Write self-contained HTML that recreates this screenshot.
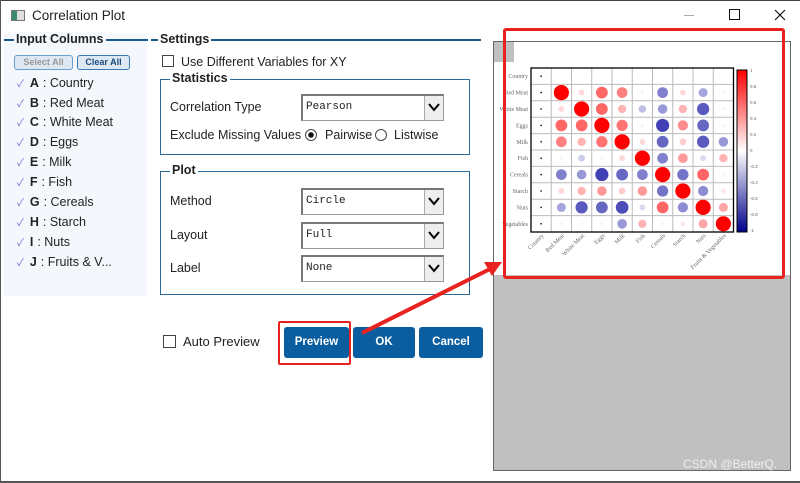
<!DOCTYPE html>
<html><head><meta charset="utf-8"><style>
*{margin:0;padding:0;box-sizing:border-box}
body{width:800px;height:483px;overflow:hidden;background:#fff;font-family:"Liberation Sans","Noto Sans CJK SC",sans-serif;position:relative;color:#222}
.a{position:absolute}
.t{font-size:12.5px;white-space:nowrap}
.hd{font-size:12.5px;font-weight:bold;color:#222;background:#fff;padding:0 2px}
.combo{position:absolute;border:1px solid #999;border-top:2px solid #777;border-left:2px solid #777;background:#fff;font-family:"Liberation Mono",monospace;font-size:11px;padding:0 3px;line-height:23px}
.combo .ar{position:absolute;right:0;top:0;bottom:0;width:19px;background:#eee;border-left:1px solid #aaa}
.combo .ar svg{position:absolute;left:3px;top:6px}
.btn{position:absolute;background:#0a5e9f;color:#fff;font-weight:bold;font-size:11.5px;text-align:center;border-radius:3px;line-height:31px}
.cb{position:absolute;border:1px solid #444;background:#fff}
.item{position:absolute;left:17px;font-size:12.5px}
.item i{color:#6a6ad8;font-style:normal;font-size:10px;margin-right:6px}
.item b{margin-right:4px}
</style></head><body>
<div class="a" style="left:0;top:0;width:800px;height:1px;background:#444"></div>
<div class="a" style="left:0;top:0;width:1px;height:483px;background:#555"></div>
<div class="a" style="left:0;top:481px;width:800px;height:2px;background:#555"></div>
<div class="a" style="left:11px;top:10px;width:14px;height:11px;border:1px solid #777;background:linear-gradient(90deg,#3a8a70 0 40%,#ddd 40%)"></div>
<div class="a t" style="left:32px;top:8px;font-size:13.5px">Correlation Plot</div>
<div class="a" style="left:684px;top:15px;width:10px;height:1px;background:#aaa"></div>
<div class="a" style="left:729px;top:9px;width:11px;height:11px;border:1px solid #111"></div>
<svg class="a" style="left:774px;top:9px" width="12" height="12"><path d="M1 1L11 11M11 1L1 11" stroke="#111" stroke-width="1.2"/></svg>
<div class="a" style="left:4px;top:34px;width:143px;height:262px;background:#f4f8fc"></div>
<div class="a" style="left:4px;top:39px;width:144px;height:2px;background:#1a5a8a"></div>
<div class="a hd" style="left:14px;top:32px;background:#f4f8fc">Input Columns</div>
<div class="a" style="left:14px;top:55px;width:59px;height:15px;border:1px solid #6aa0d0;border-radius:3px;background:#dde8f2;color:#999;font-size:9px;font-weight:bold;text-align:center;line-height:13px">Select All</div>
<div class="a" style="left:77px;top:55px;width:53px;height:15px;border:1px solid #3a7ab8;border-radius:3px;background:#dde8f2;color:#1a4a7a;font-size:9px;font-weight:bold;text-align:center;line-height:13px">Clear All</div>
<div class="item" style="top:75px"><i>✓</i><b>A</b>: Country</div>
<div class="item" style="top:95px"><i>✓</i><b>B</b>: Red Meat</div>
<div class="item" style="top:114px"><i>✓</i><b>C</b>: White Meat</div>
<div class="item" style="top:134px"><i>✓</i><b>D</b>: Eggs</div>
<div class="item" style="top:154px"><i>✓</i><b>E</b>: Milk</div>
<div class="item" style="top:174px"><i>✓</i><b>F</b>: Fish</div>
<div class="item" style="top:194px"><i>✓</i><b>G</b>: Cereals</div>
<div class="item" style="top:214px"><i>✓</i><b>H</b>: Starch</div>
<div class="item" style="top:234px"><i>✓</i><b>I</b>: Nuts</div>
<div class="item" style="top:254px"><i>✓</i><b>J</b>: Fruits &amp; V...</div>
<div class="a" style="left:151px;top:39px;width:330px;height:2px;background:#1a5a8a"></div>
<div class="a hd" style="left:158px;top:32px">Settings</div>
<div class="cb" style="left:162px;top:55px;width:12px;height:12px"></div>
<div class="a t" style="left:181px;top:55px">Use Different Variables for XY</div>
<div class="a" style="left:160px;top:79px;width:310px;height:76px;border:1px solid #2a6a9a"></div>
<div class="a hd" style="left:170px;top:71px">Statistics</div>
<div class="a t" style="left:170px;top:100px">Correlation Type</div>
<div class="combo" style="left:301px;top:94px;width:143px;height:27px">Pearson<div class="ar"><svg width="12" height="10"><path d="M1 2L6 8L11 2" stroke="#000" stroke-width="2" fill="none"/></svg></div></div>
<div class="a t" style="left:170px;top:128px">Exclude Missing Values</div>
<div class="a" style="left:305px;top:129px;width:12px;height:12px;border:1px solid #444;border-radius:50%;background:radial-gradient(#111 0 2.5px,#fff 3px)"></div>
<div class="a t" style="left:325px;top:128px">Pairwise</div>
<div class="a" style="left:375px;top:129px;width:12px;height:12px;border:1px solid #444;border-radius:50%"></div>
<div class="a t" style="left:394px;top:128px">Listwise</div>
<div class="a" style="left:160px;top:171px;width:310px;height:124px;border:1px solid #2a6a9a"></div>
<div class="a hd" style="left:170px;top:163px">Plot</div>
<div class="a t" style="left:170px;top:194px">Method</div>
<div class="combo" style="left:301px;top:188px;width:143px;height:27px">Circle<div class="ar"><svg width="12" height="10"><path d="M1 2L6 8L11 2" stroke="#000" stroke-width="2" fill="none"/></svg></div></div>
<div class="a t" style="left:170px;top:228px">Layout</div>
<div class="combo" style="left:301px;top:222px;width:143px;height:27px">Full<div class="ar"><svg width="12" height="10"><path d="M1 2L6 8L11 2" stroke="#000" stroke-width="2" fill="none"/></svg></div></div>
<div class="a t" style="left:170px;top:261px">Label</div>
<div class="combo" style="left:301px;top:255px;width:143px;height:27px">None<div class="ar"><svg width="12" height="10"><path d="M1 2L6 8L11 2" stroke="#000" stroke-width="2" fill="none"/></svg></div></div>
<div class="cb" style="left:163px;top:335px;width:13px;height:13px"></div>
<div class="a t" style="left:183px;top:334px;font-size:13px">Auto Preview</div>
<div class="btn" style="left:284px;top:327px;width:65px;height:31px">Preview</div>
<div class="btn" style="left:353px;top:327px;width:62px;height:31px">OK</div>
<div class="btn" style="left:419px;top:327px;width:64px;height:31px">Cancel</div>
<div class="a" style="left:278px;top:321px;width:73px;height:44px;border:2px solid #e8231f;border-radius:2px"></div>
<div class="a" style="left:493px;top:41px;width:298px;height:430px;background:#c0c0c0;border:1px solid #666"></div>
<div class="a" style="left:494px;top:42px;width:296px;height:233px;background:#fff"></div>
<div class="a" style="left:494px;top:42px;width:20px;height:20px;background:#c0c0c0"></div>
<svg class="a" style="left:0;top:0" width="800" height="483" id="sv">
<line x1="362" y1="333" x2="492" y2="268" stroke="#e8231f" stroke-width="4"/>
<polygon points="502,262 484,262 492,276" fill="#e8231f"/>
</svg>
<div class="a" style="left:503px;top:28px;width:282px;height:251px;border:3px solid #e8231f;border-radius:3px"></div>
<div class="a" style="left:683px;top:457px;font-size:12px;color:#eee">CSDN @BetterQ.</div>
<script>
var sv=document.getElementById('sv'),N='http://www.w3.org/2000/svg';
var names=["Country","Red Meat","White Meat","Eggs","Milk","Fish","Cereals","Starch","Nuts","Vegetables"];
var cn=["Country","Red Meat","White Meat","Eggs","Milk","Fish","Cereals","Starch","Nuts","Fruits & Vegetables"];
var M=[[1,.15,.6,.5,.05,-.5,.15,-.35,.05],[.15,1,.6,.3,-.25,-.4,.3,-.65,.05],[.6,.6,1,.55,.05,-.75,.45,-.6,.05],[.5,.3,.55,1,.15,-.6,.2,-.65,-.4],[.05,-.2,.05,.15,1,-.5,.4,-.15,.3],[-.5,-.4,-.75,-.6,-.5,1,-.55,.6,.05],[.15,.3,.4,.2,.4,-.55,1,-.45,.1],[-.35,-.65,-.6,-.7,-.15,.6,-.45,1,.35],[.05,.05,.05,-.4,.3,.05,.1,.35,1]];
function el(t,a){var e=document.createElementNS(N,t);for(var k in a)e.setAttribute(k,a[k]);sv.appendChild(e);return e}
function col(v){var a=Math.abs(v);if(v>0)return 'rgb(255,'+Math.round(255*(1-a))+','+Math.round(255*(1-a))+')';return 'rgb('+Math.round(255*(1-a))+','+Math.round(255*(1-a))+','+Math.round(255-100*a)+')'}
var x0=531,y0=68,w=20.25,h=16.4;
for(var i=0;i<=10;i++){el('line',{x1:x0+i*w,y1:y0,x2:x0+i*w,y2:y0+10*h,stroke:'#bbb','stroke-width':1});el('line',{x1:x0,y1:y0+i*h,x2:x0+10*w,y2:y0+i*h,stroke:'#bbb','stroke-width':1})}
for(var r=0;r<10;r++){el('circle',{cx:x0+w/2,cy:y0+r*h+h/2,r:.8,fill:'#000'});
 var t=el('text',{x:528,y:y0+r*h+h/2+2,'font-size':6,'text-anchor':'end',fill:'#666','font-family':'Liberation Serif,serif'});t.textContent=names[r];
 var c=x0+r*w+w/2,cy=y0+10*h+4;var t2=el('text',{x:c+3,y:cy,'font-size':6,'text-anchor':'end',fill:'#666','font-family':'Liberation Serif,serif',transform:'rotate(-45 '+(c+3)+' '+cy+')'});t2.textContent=cn[r];}
for(var r=1;r<10;r++)for(var c=1;c<10;c++){var v=M[r-1][c-1];el('circle',{cx:x0+c*w+w/2,cy:y0+r*h+h/2,r:Math.max(1.5,7.6*Math.sqrt(Math.abs(v))),fill:col(v)})}
el('rect',{x:x0,y:y0,width:10*w,height:10*h,fill:'none',stroke:'#000','stroke-width':1.3});
var g=el('linearGradient',{id:'cg',x1:0,y1:0,x2:0,y2:1});
[['0','#f00'],['.5','#fff'],['1','#00008b']].forEach(function(s){var st=document.createElementNS(N,'stop');st.setAttribute('offset',s[0]);st.setAttribute('stop-color',s[1]);g.appendChild(st)});
el('rect',{x:737,y:70,width:10,height:162,fill:'url(#cg)',stroke:'#000','stroke-width':1});
['1','0.8','0.6','0.4','0.2','0','-0.2','-0.4','-0.6','-0.8','-1'].forEach(function(s,i){var t=el('text',{x:750,y:72+i*16,'font-size':4.5,fill:'#666'});t.textContent=s});
</script>
</body></html>
